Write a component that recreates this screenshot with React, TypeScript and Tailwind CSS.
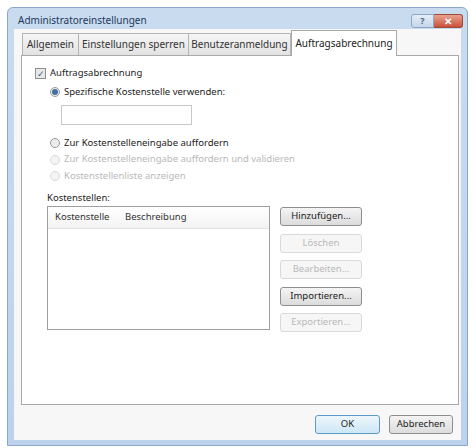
import type { ReactNode } from "react";

const font = { fontFamily: '"Noto Sans", "Open Sans", sans-serif' };

function Tab({ label, width, active }: { label: string; width: string; active?: boolean }) {
  if (active) {
    return (
      <div
        className={`relative z-10 -mb-px flex h-[26px] items-start justify-center border border-b-0 border-[#a9a9a9] bg-white pt-[5px] text-[10px] text-[#222] ${width}`}
      >
        {label}
      </div>
    );
  }
  return (
    <div
      className={`flex h-[22px] items-center justify-center border border-b-0 border-r-0 border-[#b4b4b4] bg-gradient-to-b from-[#f6f6f6] to-[#e2e2e2] text-[10px] text-[#333] ${width}`}
    >
      {label}
    </div>
  );
}

function Radio({
  label,
  checked,
  disabled,
}: {
  label: string;
  checked?: boolean;
  disabled?: boolean;
}) {
  return (
    <div className="flex h-[16px] items-center gap-[4px]">
      <span
        className={`flex h-[10px] w-[10px] items-center justify-center rounded-full border ${
          disabled ? "border-[#d8d8d8] bg-[#f4f4f4]" : "border-[#9a9a9a] bg-[#ececec]"
        }`}
      >
        {checked && <span className="h-[6px] w-[6px] rounded-full bg-[#3f6fa6]" />}
      </span>
      <span className={`text-[9.5px] ${disabled ? "text-[#b8b8b8]" : "text-[#222]"}`}>
        {label}
      </span>
    </div>
  );
}

function Btn({
  children,
  disabled,
  primary,
  className = "",
}: {
  children: ReactNode;
  disabled?: boolean;
  primary?: boolean;
  className?: string;
}) {
  const look = disabled
    ? "border-[#d9d9d9] bg-[#f6f6f6] text-[#b9b9b9]"
    : primary
    ? "border-[#5c9bc6] bg-gradient-to-b from-[#eef7fc] to-[#cde7f5] text-[#222]"
    : "border-[#8e8e8e] bg-gradient-to-b from-[#f4f4f4] to-[#dcdcdc] text-[#222]";
  return (
    <div
      className={`flex h-[19px] items-center justify-center rounded-[3px] border text-[9.5px] ${look} ${className}`}
    >
      {children}
    </div>
  );
}

export default function App() {
  return (
    <div className="h-[448px] w-[476px] bg-white px-[7px] pt-[7px]" style={font}>
      <div className="flex h-[439px] w-[461px] flex-col rounded-t-[6px] border border-[#8aa7c9] bg-gradient-to-b from-[#c9dbef] to-[#bcd2ec]">
        {/* title bar */}
        <div className="flex h-[21px] items-start justify-between pl-[10px] pr-[4px]">
          <span className="pt-[7px] text-[10px] leading-none text-[#1e395b]">
            Administratoreinstellungen
          </span>
          <div className="flex items-start pt-[6px]">
            <div className="flex h-[14px] w-[23px] items-center justify-center rounded-l-[3px] border border-[#8ea7c4] bg-gradient-to-b from-[#e4edf7] to-[#c5d6ea] text-[9px] font-bold text-[#4b6586]">
              ?
            </div>
            <div className="flex h-[14px] w-[29px] items-center justify-center rounded-r-[3px] border border-l-0 border-[#9b4a3c] bg-gradient-to-b from-[#e8a28f] to-[#c8503a] text-[10px] font-bold text-white">
              ✕
            </div>
          </div>
        </div>

        {/* client area */}
        <div className="mx-[6px] mb-[5px] flex flex-1 flex-col bg-[#f7f7f7] px-[7px] pt-[1px]">
          <div className="flex items-end pl-[1px]">
            <Tab label="Allgemein" width="w-[56px]" />
            <Tab label="Einstellungen sperren" width="w-[110px]" />
            <div className="border-r border-[#b4b4b4]">
              <Tab label="Benutzeranmeldung" width="w-[102px]" />
            </div>
            <Tab label="Auftragsabrechnung" width="w-[106px]" active />
          </div>

          <div className="flex h-[350px] w-[438px] flex-col border border-[#a9a9a9] bg-white pl-[13px] pt-[9px]">
            <div className="flex h-[16px] items-center gap-[4px]">
              <span className="flex h-[11px] w-[11px] items-center justify-center border border-[#8f8f8f] bg-[#e8e8e8] text-[9px] leading-none text-[#3a5f8a]">
                ✓
              </span>
              <span className="text-[9.5px] text-[#222]">Auftragsabrechnung</span>
            </div>

            <div className="mt-[3px] pl-[15px]">
              <Radio label="Spezifische Kostenstelle verwenden:" checked />
              <div className="ml-[11px] mt-[5px] h-[20px] w-[131px] border border-[#c8c8c8] bg-white" />
            </div>

            <div className="mt-[10px] flex flex-col gap-[0.5px] pl-[15px]">
              <Radio label="Zur Kostenstelleneingabe auffordern" />
              <Radio label="Zur Kostenstelleneingabe auffordern und validieren" disabled />
              <Radio label="Kostenstellenliste anzeigen" disabled />
            </div>

            <div className="mt-[7px] pl-[12px] text-[9.5px] leading-[14px] text-[#222]">
              Kostenstellen:
            </div>

            <div className="mt-[1px] flex gap-[10px] pl-[12px]">
              <div className="h-[124px] w-[223px] border border-[#9f9f9f] bg-white">
                <div className="flex h-[22px] items-center border-b border-[#e2e2e2] bg-gradient-to-b from-white to-[#f3f3f3] pl-[7px] text-[9.5px] text-[#333]">
                  <span className="w-[70px]">Kostenstelle</span>
                  <span>Beschreibung</span>
                </div>
              </div>
              <div className="mt-[1px] flex w-[82px] flex-col gap-[7.5px]">
                <Btn>Hinzufügen...</Btn>
                <Btn disabled>Löschen</Btn>
                <Btn disabled>Bearbeiten...</Btn>
                <Btn>Importieren...</Btn>
                <Btn disabled>Exportieren...</Btn>
              </div>
            </div>
          </div>

          <div className="mt-[10px] flex justify-end gap-[9px] pr-[1px]">
            <Btn primary className="w-[65px]">OK</Btn>
            <Btn className="w-[64px]">Abbrechen</Btn>
          </div>
        </div>
      </div>
    </div>
  );
}
